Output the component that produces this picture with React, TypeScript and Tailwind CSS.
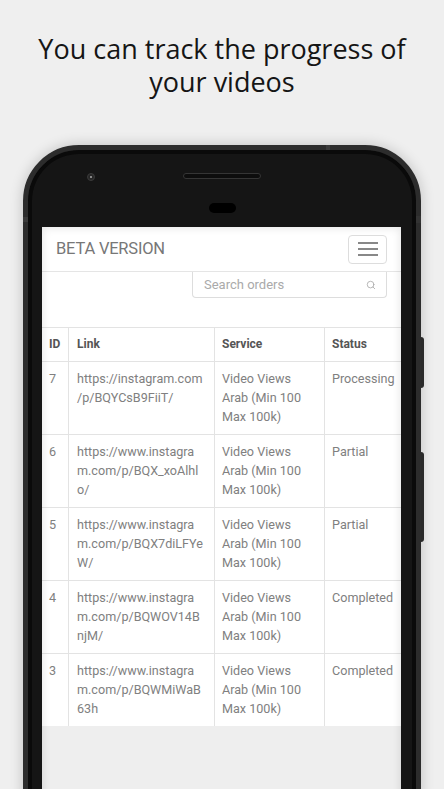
import { Search } from "lucide-react";

const orders = [
  { id: 7, link: ["https://instagram.com", "/p/BQYCsB9FiiT/"], status: "Processing" },
  { id: 6, link: ["https://www.instagra", "m.com/p/BQX_xoAlhl", "o/"], status: "Partial" },
  { id: 5, link: ["https://www.instagra", "m.com/p/BQX7diLFYe", "W/"], status: "Partial" },
  { id: 4, link: ["https://www.instagra", "m.com/p/BQWOV14B", "njM/"], status: "Completed" },
  { id: 3, link: ["https://www.instagra", "m.com/p/BQWMiWaB", "63h"], status: "Completed" },
];

const service = ["Video Views", "Arab (Min 100", "Max 100k)"];

function Lines({ items }: { items: string[] }) {
  return (
    <>
      {items.map((l, i) => (
        <div key={i} className="whitespace-nowrap">
          {l}
        </div>
      ))}
    </>
  );
}

export default function App() {
  return (
    <div className="h-[789px] w-full overflow-hidden bg-[#efefef] flex flex-col items-center">
      <div className="pt-[32px] text-center text-[27px] text-[#151515] font-['Open_Sans',sans-serif]">
        <div className="h-[33px] leading-[33px]">You can track the progress of</div>
        <div className="h-[33px] leading-[33px]">your videos</div>
      </div>

      {/* phone */}
      <div className="relative mt-[47px] w-[398px] h-[700px] shrink-0 rounded-[56px] border-[5px] border-[#2c2c2c] bg-[#151515] shadow-[0_0_14px_rgba(0,0,0,0.2),inset_0_0_0_4px_#0a0a0a] flex flex-col">
        {/* side buttons / antenna marks */}
        <div className="absolute right-[-8px] top-[187px] w-[3px] h-[51px] rounded-r-sm bg-[#2a2a2a]" />
        <div className="absolute right-[-8px] top-[302px] w-[3px] h-[90px] rounded-r-sm bg-[#2a2a2a]" />
        <div className="absolute left-[-5px] top-[67px] w-[5px] h-[5px] bg-[#3a3a3a]" />
        <div className="absolute right-[-5px] top-[66px] w-[5px] h-[7px] bg-[#333]" />
        <div className="absolute left-[298px] top-[-5px] w-[4px] h-[5px] bg-[#3a3a3a]" />

        {/* top bezel */}
        <div className="relative h-[77px] shrink-0 flex flex-col items-center pt-[23px]">
          <div className="absolute left-[59px] top-[23px] w-[8px] h-[8px] rounded-full bg-[#262626] border border-[#3a3a3a] flex items-center justify-center">
            <div className="w-[2px] h-[2px] rounded-full bg-[#aaa]" />
          </div>
          <div className="w-[78px] h-[6px] rounded-full bg-[#0d0d0d] border border-[#353535]" />
          <div className="mt-[24px] w-[27px] h-[10px] rounded-full bg-black" />
        </div>

        {/* screen */}
        <div className="relative ml-[14px] mr-[15px] flex-1 overflow-hidden bg-[#eeeeee] flex flex-col font-['Roboto',sans-serif]">
          <div className="bg-white">
            <div className="h-[45px] border-b border-[#e5e5e5] flex items-center justify-between pl-[14px] pr-[14px]">
              <span className="text-[16.5px] text-[#777] tracking-[-0.2px]">BETA VERSION</span>
              <div className="w-[39px] h-[29px] rounded-[4px] border border-[#ddd] flex flex-col items-center justify-center gap-[4px]">
                <div className="w-[20px] h-[2px] bg-[#888]" />
                <div className="w-[20px] h-[2px] bg-[#888]" />
                <div className="w-[20px] h-[2px] bg-[#888]" />
              </div>
            </div>

            <div className="flex justify-end pr-[14px]">
              <div className="w-[195px] h-[26px] border border-t-0 border-[#ddd] rounded-b-[4px] flex items-center justify-between pl-[11px] pr-[10px]">
                <span className="text-[13px] text-[#aaa]">Search orders</span>
                <Search size={10} strokeWidth={2} className="text-[#aaa]" />
              </div>
            </div>

            <div className="mt-[29px] w-[372px] text-[12.6px]">
              <div className="grid grid-cols-[26px_146px_110px_90px] border-t border-[#e3e3e3] text-[12px] font-bold text-[#555] leading-[18px]">
                <div className="pl-[7px] pt-[7px] pb-[8px]">ID</div>
                <div className="border-l border-[#e3e3e3] pl-[8px] pt-[7px] pb-[8px]">Link</div>
                <div className="border-l border-[#e3e3e3] pl-[7px] pt-[7px] pb-[8px]">Service</div>
                <div className="border-l border-[#e3e3e3] pl-[7px] pt-[7px] pb-[8px]">Status</div>
              </div>
              {orders.map((o) => (
                <div
                  key={o.id}
                  className="grid grid-cols-[26px_146px_110px_90px] border-t border-[#e3e3e3] text-[#808080] leading-[19px]"
                >
                  <div className="pl-[7px] pt-[7px] pb-[8px]">{o.id}</div>
                  <div className="border-l border-[#e3e3e3] pl-[8px] pt-[7px] pb-[8px]">
                    <Lines items={o.link} />
                  </div>
                  <div className="border-l border-[#e3e3e3] pl-[7px] pt-[7px] pb-[8px]">
                    <Lines items={service} />
                  </div>
                  <div className="border-l border-[#e3e3e3] pl-[7px] pt-[7px] pb-[8px] whitespace-nowrap">
                    {o.status}
                  </div>
                </div>
              ))}
            </div>
          </div>
          <div className="flex-1" />
          <div className="pointer-events-none absolute inset-0 shadow-[inset_0_0_10px_rgba(0,0,0,0.12)]" />
        </div>
      </div>
    </div>
  );
}
